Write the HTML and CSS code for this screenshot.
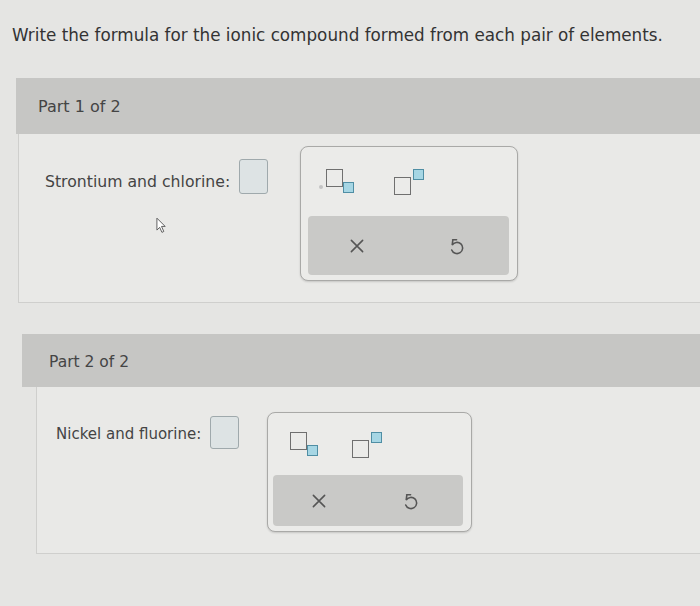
FILE: index.html
```html
<!DOCTYPE html>
<html lang="en">
<head>
    <meta charset="UTF-8">
    <title>Ionic Compounds</title>
    <link rel="stylesheet" href="styles.css">
</head>
<body>
    <h1 class="prompt">Write the formula for the ionic compound formed from each pair of elements.</h1>

    <div class="part part-one">
        <div class="part-header">Part 1 of 2</div>
        <div class="part-body">
            <span class="label">Strontium and chlorine:</span>
            <span class="answer"></span>
            <div class="palette">
                <div class="tools">
                    <span class="dot"></span>
                    <span class="tool sub"><i class="base"></i><i class="mini"></i></span>
                    <span class="tool sup"><i class="base"></i><i class="mini"></i></span>
                </div>
                <div class="actions">
                    <svg class="icon" viewBox="0 0 16 16"><path d="M3 3 L13 13 M13 3 L3 13" /></svg>
                    <svg class="icon" viewBox="0 0 16 16"><path d="M5 2.5 H8.5 M5.2 2.5 L4.6 7.2 A5 5 0 1 1 4.2 11.5" /></svg>
                </div>
            </div>
            <svg class="cursor" viewBox="0 0 12 18"><path d="M1 1 L1 14 L4 11 L6.5 16.5 L8.5 15.5 L6 10 L10 10 Z" /></svg>
        </div>
    </div>

    <div class="part part-two">
        <div class="part-header">Part 2 of 2</div>
        <div class="part-body">
            <span class="label">Nickel and fluorine:</span>
            <span class="answer"></span>
            <div class="palette">
                <div class="tools">
                    <span class="tool sub"><i class="base"></i><i class="mini"></i></span>
                    <span class="tool sup"><i class="base"></i><i class="mini"></i></span>
                </div>
                <div class="actions">
                    <svg class="icon" viewBox="0 0 16 16"><path d="M3 3 L13 13 M13 3 L3 13" /></svg>
                    <svg class="icon" viewBox="0 0 16 16"><path d="M5 2.5 H8.5 M5.2 2.5 L4.6 7.2 A5 5 0 1 1 4.2 11.5" /></svg>
                </div>
            </div>
        </div>
    </div>
</body>
</html>
```

FILE: styles.css
```css
body {
    margin: 0;
    background: #e5e5e3;
    font-family: "DejaVu Sans", Verdana, sans-serif;
    color: #3a3a3a;
    overflow: hidden;
}
.prompt {
    margin: 0;
    padding: 24px 0 0 12px;
    font-size: 16.8px;
    font-weight: normal;
    line-height: 22px;
    color: #333;
}
.part-header {
    background: #c6c6c4;
    color: #444;
}
.part-body {
    position: relative;
    display: flex;
    align-items: flex-start;
    border-left: 1px solid #cfcfcd;
    border-bottom: 1px solid #cfcfcd;
    background: #e9e9e7;
}
.label {
    color: #444;
}
.answer {
    display: block;
    background: #dde3e4;
    border: 1px solid #9fa9ac;
    border-radius: 3px;
    box-sizing: border-box;
}
.palette {
    display: flex;
    flex-direction: column;
    box-sizing: border-box;
    border: 1px solid #a9a9a7;
    border-radius: 8px;
    background: #ebebe9;
    box-shadow: 0 1px 2px rgba(0,0,0,0.15);
}
.tools {
    position: relative;
    flex: 1;
    display: flex;
    align-items: center;
}
.dot {
    position: absolute;
    width: 4px;
    height: 4px;
    border-radius: 2px;
    background: #c4c4c4;
}
.tool {
    position: relative;
    display: block;
    width: 30px;
    height: 25px;
}
.tool i {
    position: absolute;
    display: block;
    box-sizing: border-box;
}
.tool .base {
    width: 17px;
    height: 18px;
    border: 1.5px solid #6f6f6f;
}
.tool .mini {
    width: 11px;
    height: 11px;
    background: #a6d6e4;
    border: 1.5px solid #4f8ea4;
}
.sub .base { left: 0; top: 0; }
.sub .mini { left: 17px; top: 13px; }
.sup .base { left: 0; top: 8px; }
.sup .mini { left: 19px; top: 0; }
.actions {
    display: flex;
    justify-content: space-around;
    align-items: center;
    background: #c9c9c7;
    border-radius: 4px;
}
.icon {
    width: 18px;
    height: 18px;
    fill: none;
    stroke: #555;
    stroke-width: 1.4;
    stroke-linecap: round;
}
.cursor {
    position: absolute;
    left: 137px;
    top: 83px;
    width: 11px;
    height: 17px;
    fill: #fff;
    stroke: #555;
    stroke-width: 1;
}

/* part one */
.part-one {
    margin: 32px 0 0 16px;
}
.part-one .part-header {
    height: 56px;
    line-height: 58px;
    padding-left: 22px;
    font-size: 16px;
}
.part-one .part-body {
    margin-left: 2px;
    height: 168px;
    padding-left: 26px;
}
.part-one .label {
    margin-top: 31px;
    line-height: 34px;
    font-size: 15.7px;
}
.part-one .answer {
    margin: 25px 0 0 9px;
    width: 29px;
    height: 35px;
}
.part-one .palette {
    margin: 12px 0 0 32px;
    width: 218px;
    height: 135px;
    padding: 0 8px 5px 7px;
}
.part-one .tools {
    padding-left: 18px;
    gap: 38px;
}
.part-one .dot { left: 11px; top: 38px; }
.part-one .actions {
    height: 59px;
    padding-right: 4px;
}

/* part two */
.part-two {
    margin: 31px 0 0 22px;
}
.part-two .part-header {
    height: 53px;
    line-height: 56px;
    padding-left: 27px;
    font-size: 15.5px;
}
.part-two .part-body {
    margin-left: 14px;
    height: 166px;
    padding-left: 19px;
}
.part-two .label {
    margin-top: 31px;
    line-height: 32px;
    font-size: 15px;
}
.part-two .answer {
    margin: 29px 0 0 9px;
    width: 29px;
    height: 33px;
}
.part-two .palette {
    margin: 25px 0 0 28px;
    width: 205px;
    height: 120px;
    padding: 0 8px 5px 5px;
}
.part-two .tools {
    padding-left: 17px;
    gap: 32px;
}
.part-two .actions {
    height: 51px;
    padding-right: 8px;
}
```
